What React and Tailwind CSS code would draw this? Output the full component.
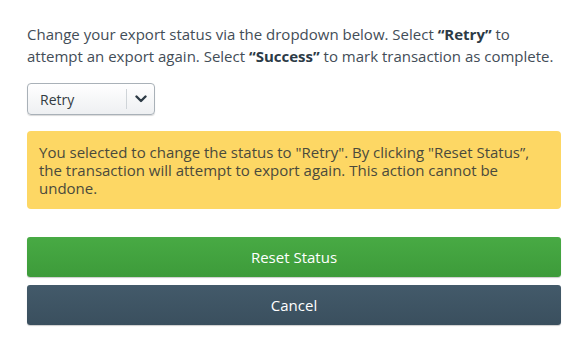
import React from "react";

export default function App() {
  return (
    <div className="w-[588px] h-[359px] bg-white px-[27px] pt-[23px] font-['Open_Sans',sans-serif] text-[#434d57]">
      <p className="text-[15px] leading-[22px] w-[536px]">
        Change your export status via the dropdown below. Select{" "}
        <b className="font-bold text-[#2c3a46]">“Retry”</b> to attempt an export again. Select{" "}
        <b className="font-bold text-[#2c3a46]">“Success”</b> to mark transaction as complete.
      </p>
      <div className="mt-[16px] flex h-[32px] w-[128px] items-center rounded-[4px] border border-[#a9b1b8] bg-gradient-to-b from-[#ffffff] to-[#eef0f2] shadow-[0_1px_1px_rgba(0,0,0,0.15)]">
        <span className="flex-1 pl-[12px] text-[14px] text-[#333b42]">Retry</span>
        <span className="h-[20px] w-px bg-[#cfd4d8]" />
        <span className="flex w-[27px] items-center justify-center">
          <svg width="12" height="8" viewBox="0 0 12 8">
            <path d="M1.5 1.5 L6 6 L10.5 1.5" fill="none" stroke="#2e3b46" strokeWidth="2.4" strokeLinecap="round" strokeLinejoin="round" />
          </svg>
        </span>
      </div>
      <div className="mt-[16px] rounded-[4px] bg-[#fdd764] px-[12px] py-[12px] text-[15px] leading-[18px] text-[#4a4a3c]">
        You selected to change the status to "Retry". By clicking "Reset Status”, the transaction will attempt to export again. This action cannot be undone.
      </div>
      <button className="mt-[28px] flex h-[40px] w-full items-center justify-center rounded-[3px] bg-gradient-to-b from-[#48aa44] to-[#3d9b3a] text-[15px] font-medium text-white shadow-[0_1px_1px_rgba(0,0,0,0.2)]">
        Reset Status
      </button>
      <button className="mt-[8px] flex h-[40px] w-full items-center justify-center rounded-[3px] bg-gradient-to-b from-[#435a6a] to-[#3a4f5e] text-[15px] font-medium text-white shadow-[0_1px_1px_rgba(0,0,0,0.2)]">
        Cancel
      </button>
    </div>
  );
}
